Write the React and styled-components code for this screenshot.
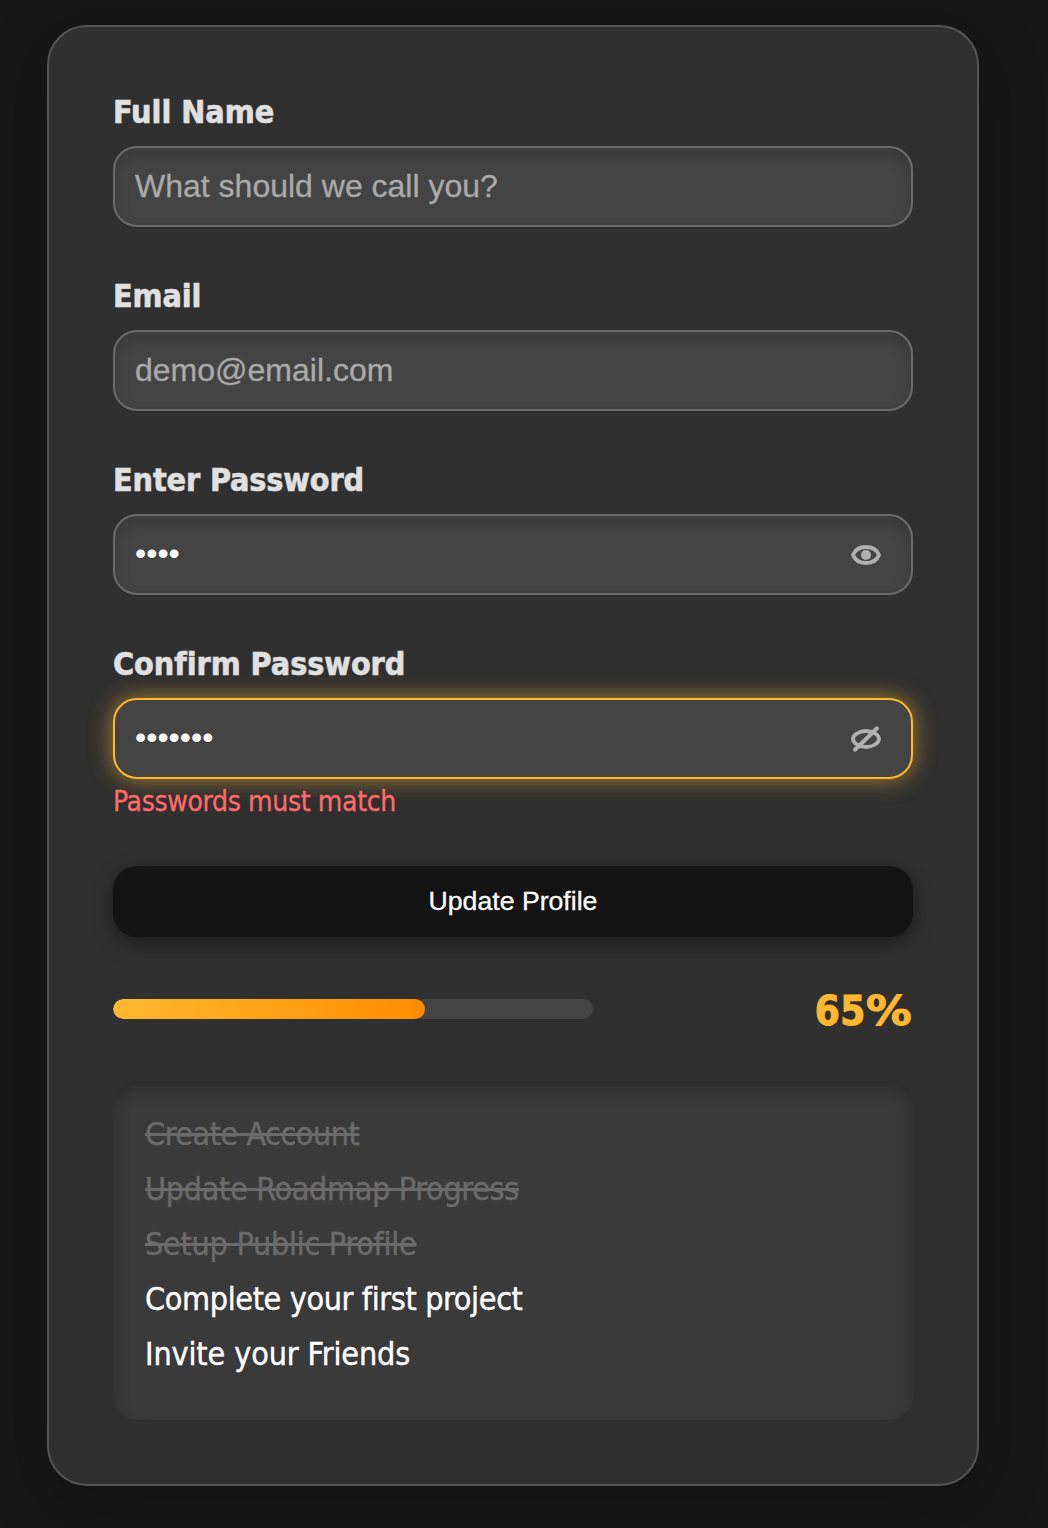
import React from 'react';
import styled, { createGlobalStyle, css } from 'styled-components';

const GlobalStyle = createGlobalStyle`
  * { box-sizing: border-box; }
  body {
    margin: 0;
    background: #181818;
    font-family: 'DejaVu Sans Condensed', 'DejaVu Sans', sans-serif;
    font-stretch: condensed;
  }
`;

const Page = styled.main`
  height: 1528px;
  padding: 25px 0 0 47px;
  overflow: hidden;
`;

const Card = styled.section`
  width: 932px;
  height: 1461px;
  padding: 64px;
  border: 2px solid #555;
  border-radius: 40px;
  background: #303030;
  box-shadow: 0 16px 64px rgba(0, 0, 0, 0.3);
`;

const Form = styled.form`
  display: flex;
  flex-direction: column;
`;

const Field = styled.div`
  display: flex;
  flex-direction: column;
  height: ${(p) => (p.$last ? 175 : 184)}px;
`;

const Label = styled.label`
  height: 39px;
  margin-bottom: 16px;
  font-size: 32px;
  font-weight: 700;
  line-height: 42px;
  letter-spacing: ${(p) => p.$track}px;
  color: #e0e0e0;
  -webkit-text-stroke: 0.6px #e0e0e0;
  white-space: nowrap;
`;

const InputShell = styled.div`
  display: flex;
  align-items: center;
  flex: none;
  height: 81px;
  padding: 0 30px 0 20px;
  border: 2px solid #6b6b6b;
  border-radius: 24px;
  background: #444;
  box-shadow: inset 0 8px 16px rgba(0, 0, 0, 0.15);
  ${(p) =>
    p.$focused &&
    css`
      border-color: #ffb830;
      box-shadow: 0 0 22px rgba(255, 184, 48, 0.6);
    `}
`;

const Input = styled.input`
  flex: 1;
  min-width: 0;
  height: 40px;
  padding: 0;
  border: 0;
  outline: 0;
  background: transparent;
  color: #fff;
  font: 32px 'Liberation Sans', Arial, sans-serif;
  &::placeholder { color: #aaa; opacity: 1; -webkit-text-stroke: 0.3px #aaa; }
  &[type='password'] { padding-bottom: 2px; }
`;

const IconButton = styled.button`
  display: flex;
  padding: 0;
  border: 0;
  background: none;
  color: #b0b0b0;
  svg { display: block; }
`;

const ErrorText = styled.p`
  margin: 4px 0 0;
  font-size: 28px;
  line-height: 38px;
  letter-spacing: -0.35px;
  color: #ff6b6b;
  -webkit-text-stroke: 0.3px #ff6b6b;
`;

const SubmitButton = styled.button`
  height: 71px;
  margin: 48px 0 0;
  padding: 0;
  border: 0;
  border-radius: 24px;
  background: #141414;
  color: #fff;
  font: 26.67px 'Liberation Sans', Arial, sans-serif;
  -webkit-text-stroke: 0.3px #fff;
  box-shadow: 0 8px 24px rgba(0, 0, 0, 0.2), 0 4px 12px rgba(0, 0, 0, 0.3);
`;

const ProgressRow = styled.div`
  display: flex;
  align-items: center;
  justify-content: space-between;
  height: 48px;
  margin-top: 48px;
`;

const Track = styled.div`
  width: 480px;
  height: 20px;
  border-radius: 10px;
  background: #444;
  overflow: hidden;
`;

const Fill = styled.div`
  height: 100%;
  border-radius: 10px;
  background: linear-gradient(90deg, #ffb830, #ff8c00);
`;

const Percent = styled.strong`
  display: flex;
  padding-top: 4px;
  font-size: 40px;
  font-weight: 700;
  line-height: 50px;
  letter-spacing: 0.6px;
  color: #ffb830;
  -webkit-text-stroke: 1px #ffb830;
`;

const PercentSign = styled.span`
  width: 47px;
  font-family: 'DejaVu Sans', sans-serif;
  font-stretch: normal;
  transform: scaleX(1.14);
  transform-origin: left;
`;

const TaskList = styled.ul`
  height: 339px;
  margin: 48px 0 0;
  padding: 32px;
  list-style: none;
  border-radius: 24px;
  background: #3a3a3a;
  box-shadow: inset 0 8px 16px rgba(0, 0, 0, 0.25);
`;

const Task = styled.li`
  height: 39px;
  margin-bottom: 16px;
  font-size: 32px;
  line-height: 42px;
  letter-spacing: ${(p) => p.$track}px;
  white-space: nowrap;
  color: ${(p) => (p.$done ? '#6b6b6b' : '#fff')};
  -webkit-text-stroke: 0.4px currentColor;
  span { text-decoration: ${(p) => (p.$done ? 'line-through' : 'none')}; }
`;

function Eye({ hidden }) {
  return (
    <svg width="30" height="30" viewBox="0 0 30 30" fill="none" stroke="currentColor" strokeLinejoin="round">
      <path
        d={
          hidden
            ? 'M2 15C2 11 8 7 15 7S28 11 28 15S22 23 15 23S2 19 2 15z'
            : 'M2 15C4 10 9 7 15 7S26 10 28 15C26 20 21 23 15 23S4 20 2 15z'
        }
        strokeWidth="3.800"
      />
      {hidden ? (
        <path d="M4 25.700L26 4.300" strokeWidth="4" strokeLinecap="round" />
      ) : (
        <circle cx="15" cy="15" r="5" fill="currentColor" stroke="none" />
      )}
    </svg>
  );
}

const fields = [
  { id: 'name', label: 'Full Name', placeholder: 'What should we call you?', track: -0.02 },
  { id: 'email', label: 'Email', placeholder: 'demo@email.com', track: -0.1 },
  { id: 'password', label: 'Enter Password', value: 'demo', track: -0.13 },
  { id: 'confirm', label: 'Confirm Password', value: 'demo123', track: -0.05, focused: true, error: 'Passwords must match' },
];

const tasks = [
  { text: 'Create Account', done: true, track: -0.47 },
  { text: 'Update Roadmap Progress', done: true, track: -0.32 },
  { text: 'Setup Public Profile', done: true, track: -0.26 },
  { text: 'Complete your first project', track: -0.35 },
  { text: 'Invite your Friends', track: -0.1 },
];

export default function App() {
  const progress = 65;
  return (
    <Page>
      <GlobalStyle />
      <Card>
        <Form>
          {fields.map((f) => (
            <Field key={f.id} $last={!!f.error}>
              <Label htmlFor={f.id} $track={f.track}>{f.label}</Label>
              <InputShell $focused={f.focused}>
                <Input
                  id={f.id}
                  type={f.value ? 'password' : 'text'}
                  defaultValue={f.value}
                  placeholder={f.placeholder}
                />
                {f.value && (
                  <IconButton type="button" aria-label="Toggle password visibility">
                    <Eye hidden={f.focused} />
                  </IconButton>
                )}
              </InputShell>
              {f.error && <ErrorText>{f.error}</ErrorText>}
            </Field>
          ))}
          <SubmitButton type="button">Update Profile</SubmitButton>
        </Form>
        <ProgressRow>
          <Track>
            <Fill style={{ width: `${progress}%` }} />
          </Track>
          <Percent>{progress}<PercentSign>%</PercentSign></Percent>
        </ProgressRow>
        <TaskList>
          {tasks.map((t) => (
            <Task key={t.text} $done={t.done} $track={t.track}><span>{t.text}</span></Task>
          ))}
        </TaskList>
      </Card>
    </Page>
  );
}
